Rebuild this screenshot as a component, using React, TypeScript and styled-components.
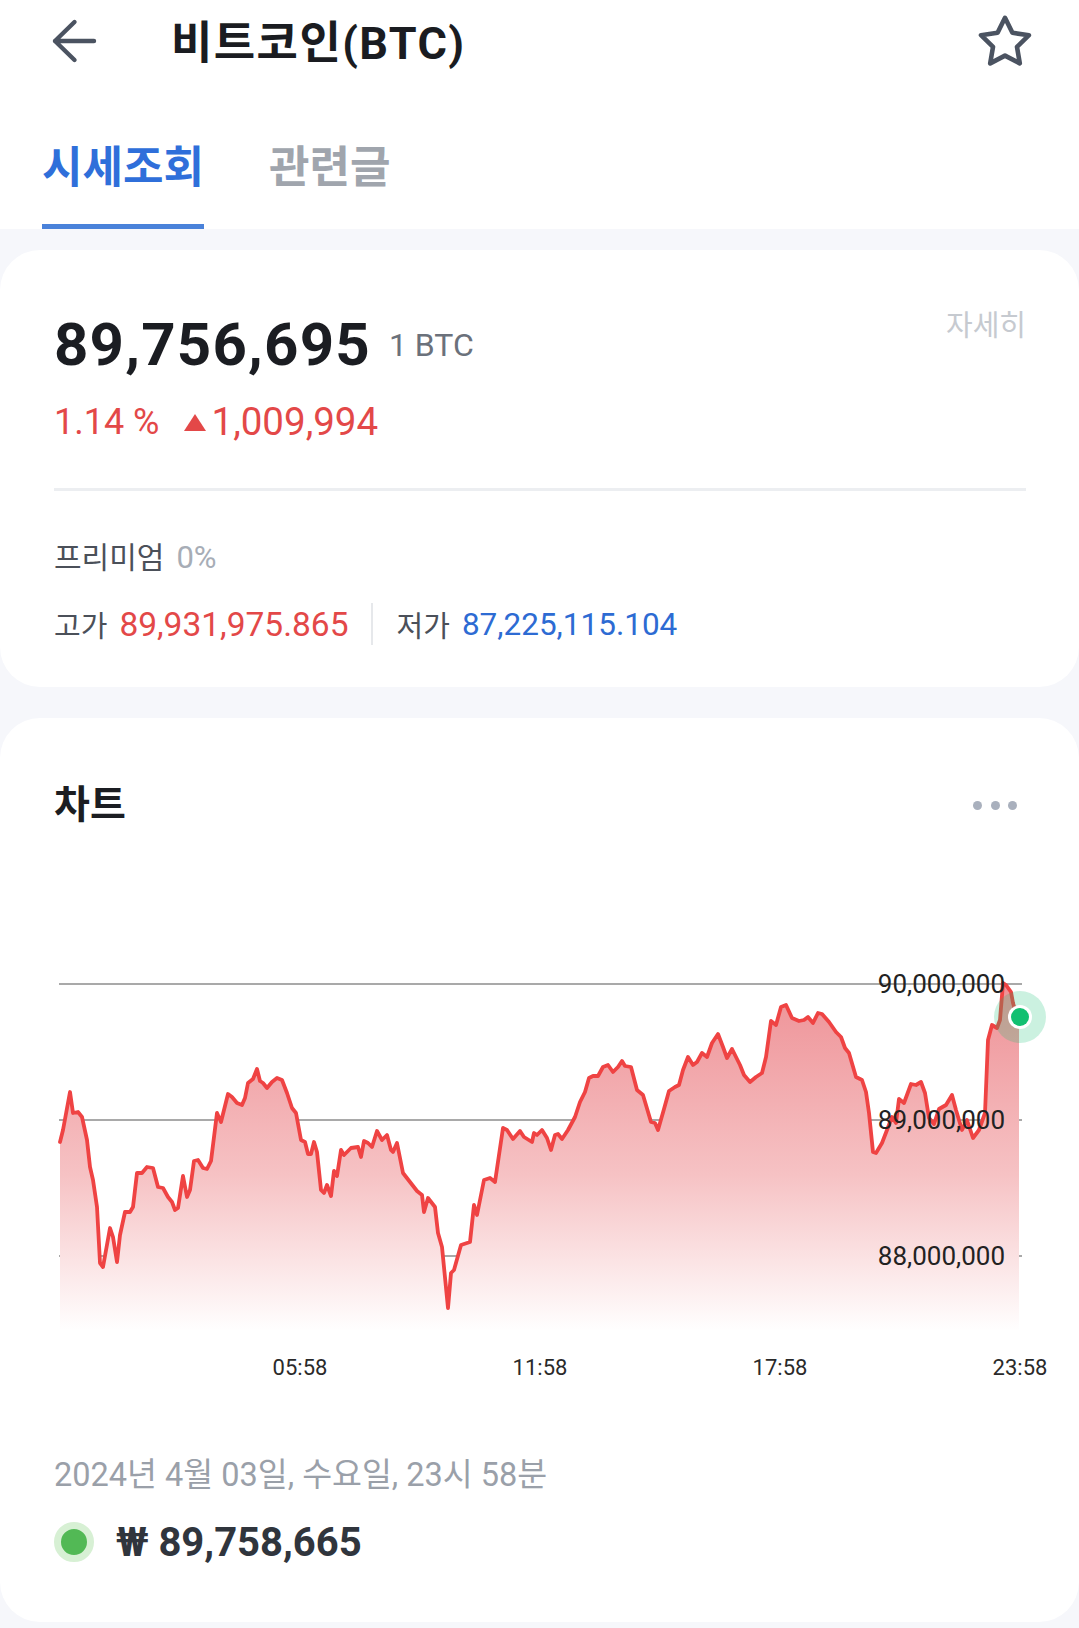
import React, { useMemo } from 'react';
import styled, { createGlobalStyle } from 'styled-components';

const GlobalStyle = createGlobalStyle`
  html, body {
    margin: 0;
    padding: 0;
    background: #f6f7fb;
  }
  body {
    font-family: Roboto, "Noto Sans CJK KR", sans-serif;
    color: #1b1d22;
    -webkit-font-smoothing: antialiased;
  }
  * { box-sizing: border-box; }
`;

// price samples, traced in page coordinates (x px, y px)
const POINTS: [number, number][] = [
  [60,1142],[63,1130],[70,1092],[73,1113],[78,1112],[82,1117],[87,1140],[90,1167],[93,1180],[97,1207],
  [100,1263],[103,1267],[110,1228],[113,1237],[117,1262],[120,1235],[125,1212],[130,1212],[133,1207],[137,1173],
  [142,1173],[147,1167],[153,1168],[158,1187],[163,1188],[168,1197],[172,1202],[175,1210],[178,1208],[183,1176],
  [187,1197],[190,1190],[194,1161],[198,1160],[203,1168],[207,1169],[211,1161],[217,1113],[221,1122],[228,1094],
  [232,1097],[237,1103],[242,1105],[245,1098],[248,1083],[253,1079],[257,1069],[260,1081],[263,1083],[267,1088],
  [272,1082],[277,1078],[282,1080],[287,1093],[292,1108],[296,1113],[301,1140],[305,1142],[308,1154],[311,1154],
  [314,1142],[317,1152],[321,1190],[324,1193],[327,1185],[331,1196],[334,1171],[337,1176],[341,1150],[344,1155],
  [351,1148],[358,1147],[361,1157],[364,1141],[368,1143],[372,1147],[377,1131],[382,1140],[387,1135],[391,1150],
  [393,1152],[397,1143],[403,1173],[410,1182],[417,1191],[422,1195],[424,1212],[428,1198],[435,1207],[438,1233],
  [442,1247],[448,1308],[451,1273],[454,1270],[461,1245],[470,1242],[474,1205],[477,1215],[484,1180],[490,1178],
  [495,1182],[503,1128],[507,1130],[513,1139],[520,1131],[524,1137],[532,1142],[534,1133],[537,1135],[542,1130],
  [547,1138],[551,1150],[555,1135],[558,1134],[562,1139],[568,1130],[575,1117],[580,1102],[585,1092],[589,1078],
  [593,1076],[598,1076],[603,1067],[608,1065],[613,1072],[618,1067],[622,1061],[625,1066],[631,1067],[637,1090],
  [643,1095],[651,1122],[655,1123],[658,1130],[664,1109],[669,1091],[675,1087],[679,1085],[683,1070],[688,1057],
  [693,1065],[697,1062],[702,1053],[707,1057],[712,1043],[718,1034],[723,1047],[727,1058],[732,1049],[740,1065],
  [744,1075],[750,1082],[756,1077],[762,1073],[766,1057],[771,1021],[776,1025],[781,1007],[786,1005],[792,1018],
  [799,1021],[804,1020],[808,1017],[813,1023],[818,1013],[822,1014],[829,1022],[836,1032],[841,1037],[845,1048],
  [849,1053],[856,1077],[862,1080],[866,1092],[869,1113],[873,1152],[876,1153],[882,1143],[887,1130],[892,1117],
  [896,1123],[899,1099],[904,1103],[911,1084],[916,1085],[921,1082],[925,1093],[929,1118],[934,1124],[939,1109],
  [946,1105],[952,1095],[956,1110],[962,1130],[967,1120],[973,1138],[979,1130],[985,1113],[988,1040],[992,1025],
  [997,1028],[1000,1020],[1003,983],[1006,985],[1011,992],[1013,1003],[1017,1017],[1019,1017],
];

const GRID = [
  { y: 984, label: '90,000,000' },
  { y: 1120, label: '89,000,000' },
  { y: 1256, label: '88,000,000' },
];

const TIMES = [
  { x: 300, label: '05:58' },
  { x: 540, label: '11:58' },
  { x: 780, label: '17:58' },
  { x: 1020, label: '23:58' },
];

const BackIcon = () => (
  <svg width="48" height="48" viewBox="0 0 48 48" fill="none">
    <path d="M44 24H5M24.5 5L5 24l19.5 19" stroke="#4b5361" strokeWidth="4.4" strokeLinecap="round" strokeLinejoin="round" />
  </svg>
);

const StarIcon = () => {
  const pts = Array.from({ length: 10 }, (_, i) => {
    const a = ((-90 + i * 36) * Math.PI) / 180;
    const r = i % 2 === 0 ? 25.2 : 12.6;
    return `${(30 + r * Math.cos(a)).toFixed(2)},${(32 + r * Math.sin(a)).toFixed(2)}`;
  }).join(' ');
  return (
    <svg width="60" height="60" viewBox="0 0 60 60" fill="none">
      <polygon points={pts} stroke="#4b5361" strokeWidth="4.6" strokeLinejoin="round" />
    </svg>
  );
};

const PriceChart = () => {
  const { line, area } = useMemo(() => {
    const l = POINTS.map(([x, y], i) => `${i ? 'L' : 'M'}${x} ${y}`).join(' ');
    const last = POINTS[POINTS.length - 1];
    return { line: l, area: `${l} L${last[0]} 1330 L60 1330 Z` };
  }, []);

  return (
    <ChartSvg viewBox="0 830 1079 560" width="1079" height="560">
      <defs>
        <linearGradient id="areaFill" gradientUnits="userSpaceOnUse" x1="0" y1="983" x2="0" y2="1332">
          <stop offset="0" stopColor="#ee9196" />
          <stop offset="0.55" stopColor="#f6c2c4" />
          <stop offset="1" stopColor="#ffffff" />
        </linearGradient>
      </defs>
      {GRID.map(g => (
        <line key={g.y} x1="59" x2="1022" y1={g.y} y2={g.y} stroke="#8d8d8d" strokeWidth="1.3" />
      ))}
      <path d={area} fill="url(#areaFill)" />
      <path d={line} fill="none" stroke="#ef4343" strokeWidth="3.8" strokeLinejoin="round" strokeLinecap="round" />
      {GRID.map(g => (
        <AxisText key={g.label} x="1005" y={g.y} textAnchor="end" dominantBaseline="central">{g.label}</AxisText>
      ))}
      {TIMES.map(t => (
        <TimeText key={t.label} x={t.x} y="1367" textAnchor="middle" dominantBaseline="central">{t.label}</TimeText>
      ))}
      <circle cx="1020" cy="1017" r="26" fill="rgba(18, 192, 113, 0.22)" />
      <circle cx="1020" cy="1017" r="12" fill="#ffffff" />
      <circle cx="1020" cy="1017" r="9" fill="#12c071" />
    </ChartSvg>
  );
};

export default function App() {
  return (
    <Page>
      <GlobalStyle />
      <Head>
        <TopBar>
          <IconButton aria-label="back"><BackIcon /></IconButton>
          <Title>비트코인(BTC)</Title>
          <IconButton aria-label="favorite"><StarIcon /></IconButton>
        </TopBar>
        <TabBar>
          <Tab $active>시세조회</Tab>
          <Tab>관련글</Tab>
        </TabBar>
      </Head>

      <Main>
        <PriceCard>
          <PriceRow>
            <PriceMain>
              <BigPrice>89,756,695</BigPrice>
              <Unit>1 BTC</Unit>
            </PriceMain>
            <DetailLink>자세히</DetailLink>
          </PriceRow>
          <ChangeRow>
            <ChangeRate>1.14 %</ChangeRate>
            <UpMark />
            <span>1,009,994</span>
          </ChangeRow>
          <Divider />
          <PremiumRow>
            프리미엄<Muted>0%</Muted>
          </PremiumRow>
          <HighLowRow>
            <StatLabel>고가</StatLabel>
            <StatValue $tone="up">89,931,975.865</StatValue>
            <VSep />
            <StatLabel>저가</StatLabel>
            <StatValue $tone="down">87,225,115.104</StatValue>
          </HighLowRow>
        </PriceCard>

        <ChartCard>
          <ChartHeader>
            <ChartTitle>차트</ChartTitle>
            <MoreDots aria-label="more">
              <i /><i /><i />
            </MoreDots>
          </ChartHeader>
          <PriceChart />
          <DateLine>2024년 4월 03일, 수요일, 23시 58분</DateLine>
          <NowRow>
            <LiveDot />
            <NowPrice>₩ 89,758,665</NowPrice>
          </NowRow>
        </ChartCard>
      </Main>
    </Page>
  );
}

const Page = styled.div`
  width: 1079px;
  min-height: 1628px;
  background: #f6f7fb;
`;
const Head = styled.header`
  background: #ffffff;
`;
const TopBar = styled.div`
  display: flex;
  align-items: center;
  height: 82px;
  padding: 0 44px 0 50px;
`;
const IconButton = styled.button`
  display: flex;
  border: 0;
  padding: 0;
  background: none;
  cursor: pointer;
`;
const Title = styled.h1`
  flex: 1;
  margin: 4px 0 0 73px;
  font-size: 45px;
  font-weight: 700;
  line-height: 1;
  letter-spacing: 1.4px;
  color: #1a1c21;
`;
const TabBar = styled.nav`
  display: flex;
  align-items: flex-end;
  gap: 65px;
  height: 147px;
  padding-left: 42px;
`;
const Tab = styled.div<{ $active?: boolean }>`
  font-size: 44px;
  font-weight: 700;
  line-height: 56px;
  padding-bottom: 28px;
  color: ${p => (p.$active ? '#2f6fda' : '#a0a5ad')};
  border-bottom: 5px solid ${p => (p.$active ? '#4a82da' : 'transparent')};
`;
const Main = styled.main`
  display: flex;
  flex-direction: column;
  gap: 31px;
  padding: 21px 0 6px;
`;
const Card = styled.section`
  background: #ffffff;
  border-radius: 40px;
`;
const PriceCard = styled(Card)`
  padding: 60px 53px 41px 54px;
`;
const PriceRow = styled.div`
  display: flex;
  align-items: flex-start;
  height: 70px;
`;
const PriceMain = styled.div`
  display: flex;
  align-items: center;
  gap: 18px;
  height: 70px;
`;
const BigPrice = styled.span`
  font-size: 60px;
  font-weight: 700;
  letter-spacing: 1.2px;
  line-height: 70px;
  color: #1b1d22;
`;
const Unit = styled.span`
  font-size: 32px;
  color: #6b717b;
`;
const DetailLink = styled.span`
  margin-left: auto;
  font-size: 29px;
  line-height: 32px;
  color: #c6cad0;
`;
const ChangeRow = styled.div`
  display: flex;
  align-items: center;
  margin-top: 18px;
  font-size: 38.5px;
  line-height: 48px;
  color: #e34848;
`;
const ChangeRate = styled.span`
  font-size: 36px;
`;
const UpMark = styled.i`
  width: 0;
  height: 0;
  margin: 0 6px 0 24px;
  border-left: 11px solid transparent;
  border-right: 11px solid transparent;
  border-bottom: 17px solid #e34848;
`;
const Divider = styled.hr`
  height: 3px;
  margin: 42px 0 0;
  border: 0;
  background: #eceef1;
`;
const PremiumRow = styled.div`
  margin-top: 47px;
  font-size: 30px;
  line-height: 40px;
  color: #4b5059;
`;
const Muted = styled.span`
  margin-left: 12px;
  font-size: 31px;
  color: #a7adb6;
`;
const HighLowRow = styled.div`
  display: flex;
  align-items: center;
  height: 44px;
  margin-top: 24px;
`;
const StatLabel = styled.span`
  font-size: 29px;
  color: #4b5059;
`;
const StatValue = styled.span<{ $tone: 'up' | 'down' }>`
  margin-left: 12px;
  font-size: ${p => (p.$tone === 'up' ? '33.5px' : '31.5px')};
  color: ${p => (p.$tone === 'up' ? '#e34848' : '#2d6bd3')};
`;
const VSep = styled.span`
  width: 2px;
  height: 42px;
  margin: 0 24px 0 22px;
  background: #e6e8eb;
`;
const ChartCard = styled(Card)`
  padding: 62px 0 56px;
`;
const ChartHeader = styled.div`
  display: flex;
  align-items: center;
  justify-content: space-between;
  height: 50px;
  padding: 0 62px 0 54px;
`;
const ChartTitle = styled.h2`
  margin: 0;
  font-size: 39px;
  font-weight: 700;
  line-height: 50px;
  color: #1b1d22;
`;
const MoreDots = styled.div`
  display: flex;
  gap: 8.5px;
  i {
    width: 9px;
    height: 9px;
    border-radius: 50%;
    background: #a9b0bd;
  }
`;
const ChartSvg = styled.svg`
  display: block;
`;
const AxisText = styled.text`
  font-family: Roboto, sans-serif;
  font-size: 26px;
  fill: #222222;
`;
const TimeText = styled.text`
  font-family: Roboto, sans-serif;
  font-size: 22px;
  fill: #2a2a2a;
`;
const DateLine = styled.div`
  margin-top: 63px;
  padding-left: 54px;
  font-size: 32.5px;
  line-height: 44px;
  color: #9aa0a9;
`;
const NowRow = styled.div`
  display: flex;
  align-items: center;
  gap: 22px;
  height: 48px;
  margin-top: 21px;
  padding-left: 54px;
`;
const LiveDot = styled.span`
  width: 40px;
  height: 40px;
  border-radius: 50%;
  border: 7px solid #d7f0d4;
  background: #52b955;
`;
const NowPrice = styled.span`
  font-size: 40px;
  font-weight: 700;
  color: #30353d;
`;
